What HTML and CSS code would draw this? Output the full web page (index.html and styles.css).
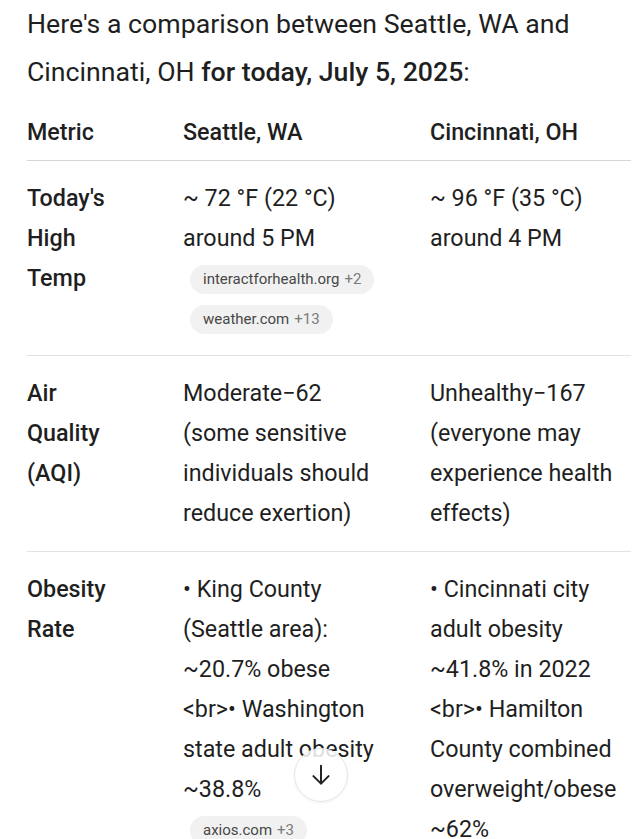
FILE: index.html
```html
<!DOCTYPE html>
<html lang="en">
<head>
<meta charset="utf-8">
<title>Seattle vs Cincinnati</title>
<link rel="stylesheet" href="styles.css">
</head>
<body>
<main class="page">
  <p class="intro">Here's a comparison between Seattle, WA and Cincinnati, OH <strong>for today, July 5, 2025</strong>:</p>
  <div class="table">
    <div class="row head">
      <div class="cell c1">Metric</div>
      <div class="cell c2">Seattle, WA</div>
      <div class="cell c3">Cincinnati, OH</div>
    </div>
    <div class="row">
      <div class="cell c1 label">Today's High Temp</div>
      <div class="cell c2">
        <div>~ 72 °F (22 °C) around 5 PM</div>
        <div class="chips">
          <span class="chip">interactforhealth.org <span class="more">+2</span></span>
          <span class="chip">weather.com <span class="more">+13</span></span>
        </div>
      </div>
      <div class="cell c3">~ 96 °F (35 °C) around 4 PM</div>
    </div>
    <div class="row">
      <div class="cell c1 label">Air Quality (AQI)</div>
      <div class="cell c2">Moderate−62 (some sensitive individuals should reduce exertion)</div>
      <div class="cell c3">Unhealthy−167 (everyone may experience health effects)</div>
    </div>
    <div class="row last">
      <div class="cell c1 label">Obesity Rate</div>
      <div class="cell c2">
        <div>• King County (Seattle area): ~20.7% obese &lt;br&gt;• Washington state adult obesity ~38.8%</div>
        <div class="chips">
          <span class="chip">axios.com <span class="more">+3</span></span>
        </div>
      </div>
      <div class="cell c3">• Cincinnati city adult obesity ~41.8% in 2022 &lt;br&gt;• Hamilton County combined overweight/obese ~62%</div>
    </div>
  </div>
</main>
<button class="scroll-btn" aria-label="Scroll down">
  <svg width="26" height="26" viewBox="0 0 24 24" fill="none" stroke="#1f1f1f" stroke-width="1.8" stroke-linecap="round" stroke-linejoin="round"><path d="M12 3.5v16.5M5 13l7 7 7-7"/></svg>
</button>
</body>
</html>
```

FILE: styles.css
```css
html, body {
  margin: 0;
  padding: 0;
  background: #ffffff;
}
body {
  font-family: Roboto, "Liberation Sans", sans-serif;
  color: #1f1f1f;
  overflow: hidden;
  height: 839px;
  position: relative;
}
.page {
  padding: 0 9px 0 27px;
}
.intro {
  margin: 0;
  font-size: 26.7px;
  line-height: 48px;
}
.intro strong {
  font-weight: 500;
}
.table {
  margin-top: 16px;
  font-size: 23.3px;
  line-height: 40px;
}
.row {
  display: grid;
  grid-template-columns: 156px 247px 1fr;
  padding: 17px 0 18px;
  border-bottom: 1px solid #e3e3e3;
}
.row.head {
  padding: 0 0 8px;
  border-bottom: 1px solid #d6d6d6;
  font-weight: 500;
}
.row.last {
  border-bottom: none;
}
.label {
  font-weight: 500;
}
.c1 {
  padding-right: 61px;
}
.c2 {
  padding-right: 49px;
}
.chips {
  display: flex;
  flex-direction: column;
  align-items: flex-start;
  gap: 11px;
  margin: 7px 0 3px 7px;
}
.chip {
  display: inline-flex;
  align-items: center;
  height: 29px;
  padding: 0 13px;
  border-radius: 15px;
  background: #f1f1f1;
  color: #474747;
  font-size: 15px;
  line-height: 29px;
  white-space: nowrap;
}
.more {
  margin-left: 5px;
  color: #7a7a7a;
}
.scroll-btn {
  position: absolute;
  left: 294px;
  top: 748px;
  width: 54px;
  height: 54px;
  border-radius: 50%;
  border: 1px solid #e6e6e6;
  background: rgba(255, 255, 255, 0.85);
  box-shadow: 0 1px 3px rgba(0, 0, 0, 0.06);
  display: flex;
  align-items: center;
  justify-content: center;
  padding: 0;
}
```
